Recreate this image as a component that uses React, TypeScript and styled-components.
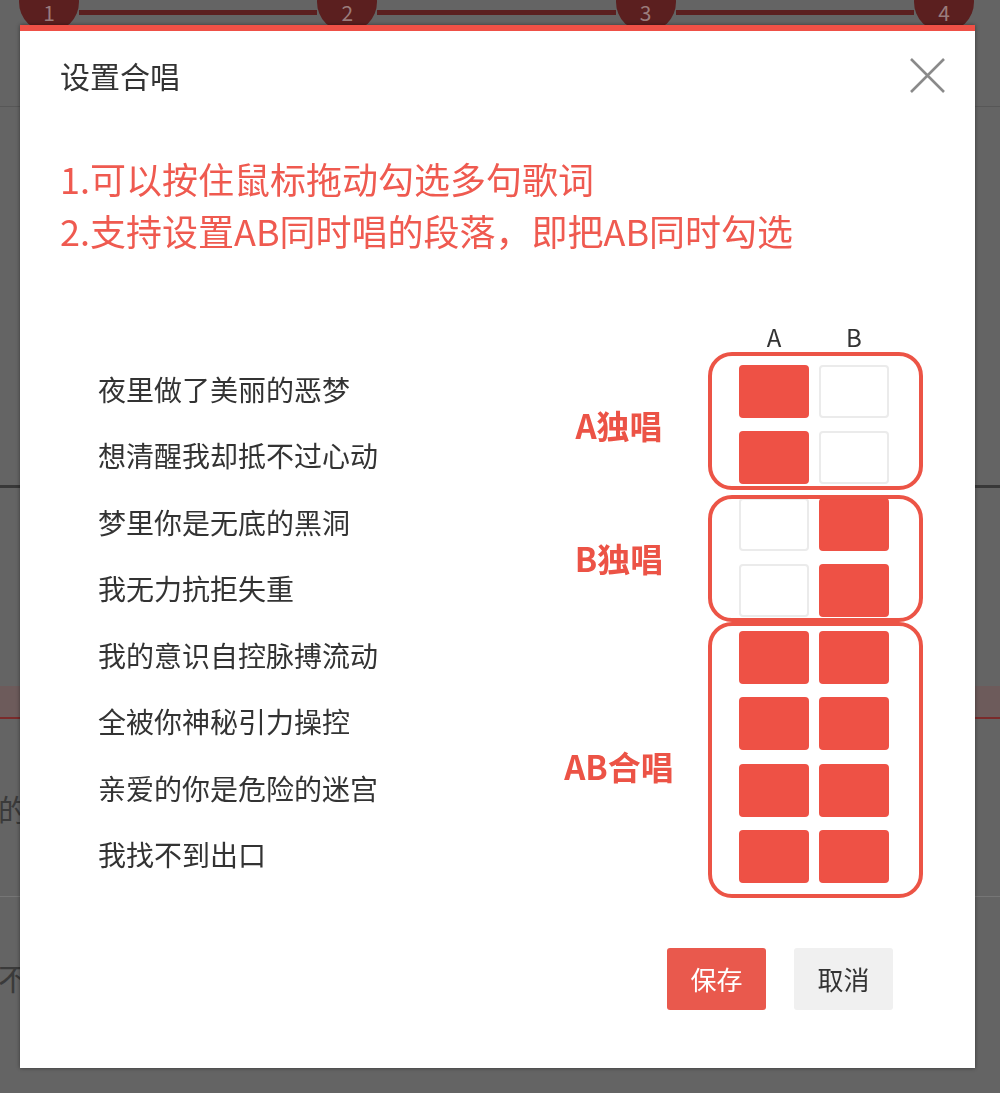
import React, { useState } from 'react';
import styled, { createGlobalStyle } from 'styled-components';

const GlobalStyle = createGlobalStyle`
    html, body {
        margin: 0;
        padding: 0;
        background: #646464;
        font-family: "Noto Sans CJK SC", "Noto Sans", sans-serif;
    }
    * { box-sizing: border-box; }
`;

/////////////////////  dimmed page behind the dialog

const Page = styled.div`
    width: 1000px;
    height: 1093px;
    overflow: hidden;
    background: #646464;
`;
const StepBar = styled.div`
    display: flex;
    align-items: flex-start;
    height: 32px;
    padding: 0 26px 0 19px;
`;
const StepDot = styled.div`
    width: 60px;
    height: 60px;
    margin-top: -28px;
    border-radius: 50%;
    background: #5b1f1f;
    color: #9a7c7c;
    font-size: 21px;
    text-align: center;
    padding-top: 29px;
    line-height: 22px;
    flex-shrink: 0;
`;
const StepLine = styled.div`
    flex: 1;
    height: 5px;
    margin-top: 10px;
    background: #5b1f1f;
`;
const BackSection = styled.div<{ $h: number; $line?: string }>`
    height: ${p => p.$h}px;
    border-bottom: ${p => p.$line || 'none'};
    display: flex;
    align-items: center;
`;
const BackBand = styled.div`
    height: 33px;
    background: #6d5b5b;
    border-bottom: 2px solid #7b2b2b;
`;
const BackText = styled.span`
    font-size: 30px;
    color: #3a3a3a;
    margin-left: -2px;
`;

/////////////////////  dialog

const Modal = styled.div`
    position: fixed;
    top: 25px;
    left: 20px;
    width: 955px;
    height: 1043px;
    background: #fff;
    border-top: 6px solid #ef5046;
    box-shadow: 0 0 4px rgba(0, 0, 0, 0.45);
    display: flex;
    flex-direction: column;
`;
const Header = styled.div`
    height: 88px;
    display: flex;
    align-items: center;
    justify-content: space-between;
    padding: 0 28px 0 40px;
`;
const Title = styled.h1`
    margin: 0;
    font-size: 30px;
    font-weight: normal;
    color: #333;
`;
const CloseButton = styled.button`
    border: none;
    background: none;
    padding: 0;
    width: 39px;
    height: 37px;
    cursor: pointer;
    display: flex;
    align-items: center;
    justify-content: center;
`;
const Body = styled.div`
    padding: 0 86px 0 40px;
`;
const Tips = styled.div`
    margin-top: 33px;
    font-size: 36px;
    line-height: 52px;
    color: #ef5a50;
`;
const LyricGrid = styled.div`
    display: grid;
    grid-template-columns: 1fr 120px 40px 70px 70px;
    grid-template-rows: 30px repeat(8, 53px);
    column-gap: 10px;
    row-gap: 13.43px;
    margin: 65.6px 0 0 38px;
`;
const ColHead = styled.div<{ $col: number }>`
    grid-row: 1;
    grid-column: ${p => p.$col};
    text-align: center;
    font-size: 24px;
    line-height: 30px;
    color: #333;
`;
const Lyric = styled.div<{ $row: number }>`
    grid-row: ${p => p.$row};
    grid-column: 1;
    align-self: center;
    margin-bottom: 5px;
    font-size: 28px;
    color: #333;
    white-space: nowrap;
`;
const Cell = styled.div<{ $row: number; $col: number; $on: boolean }>`
    grid-row: ${p => p.$row};
    grid-column: ${p => p.$col};
    border-radius: 4px;
    background: ${p => (p.$on ? '#ee5145' : '#fff')};
    border: 2px solid ${p => (p.$on ? '#ee5145' : '#ebebeb')};
    cursor: pointer;
`;
const GroupBox = styled.div<{ $rows: string; $top: number; $bottom: number }>`
    grid-row: ${p => p.$rows};
    grid-column: 4 / 6;
    margin: ${p => p.$top}px -34px ${p => p.$bottom}px -31px;
    border: 4px solid #ec5446;
    border-radius: 24px;
    pointer-events: none;
    z-index: 1;
`;
const GroupLabel = styled.div<{ $rows: string; $shift?: number }>`
    grid-row: ${p => p.$rows};
    grid-column: 2;
    align-self: center;
    justify-self: center;
    margin-top: ${p => p.$shift || 0}px;
    font-size: 33px;
    font-weight: bold;
    color: #ec5346;
    white-space: nowrap;
`;
const Footer = styled.div`
    display: flex;
    justify-content: flex-end;
    gap: 28px;
    margin: 65px 82px 0 0;
`;
const Button = styled.button<{ $primary?: boolean }>`
    width: 99px;
    height: 62px;
    border: none;
    border-radius: 3px;
    font-family: inherit;
    font-size: 26px;
    cursor: pointer;
    background: ${p => (p.$primary ? '#e9594d' : '#f0f0f0')};
    color: ${p => (p.$primary ? '#fff' : '#333')};
`;

const LYRICS = [
    '夜里做了美丽的恶梦',
    '想清醒我却抵不过心动',
    '梦里你是无底的黑洞',
    '我无力抗拒失重',
    '我的意识自控脉搏流动',
    '全被你神秘引力操控',
    '亲爱的你是危险的迷宫',
    '我找不到出口',
];

const INITIAL = [
    [true, false],
    [true, false],
    [false, true],
    [false, true],
    [true, true],
    [true, true],
    [true, true],
    [true, true],
];

const App: React.FC = () => {
    const [marks, setMarks] = useState(INITIAL);

    const toggle = (row: number, col: number) => {
        const next = marks.map(r => [...r]);
        next[row][col] = !next[row][col];
        setMarks(next);
    };

    return (
        <Page>
            <GlobalStyle />
            <StepBar>
                <StepDot>1</StepDot>
                <StepLine />
                <StepDot>2</StepDot>
                <StepLine />
                <StepDot>3</StepDot>
                <StepLine />
                <StepDot>4</StepDot>
            </StepBar>
            <BackSection $h={75} $line="1px solid #575757" />
            <BackSection $h={381} $line="3px solid #383838" />
            <BackSection $h={198} />
            <BackBand />
            <BackSection $h={178} $line="1px solid #767676">
                <BackText>的</BackText>
            </BackSection>
            <BackSection $h={160}>
                <BackText>不</BackText>
            </BackSection>

            <Modal>
                <Header>
                    <Title>设置合唱</Title>
                    <CloseButton aria-label="关闭">
                        <svg width="37" height="35" viewBox="0 0 37 35">
                            <path d="M2 1 L35 34 M35 1 L2 34" stroke="#8a8a8a" strokeWidth="2.6" fill="none" />
                        </svg>
                    </CloseButton>
                </Header>
                <Body>
                    <Tips>
                        <div>1.可以按住鼠标拖动勾选多句歌词</div>
                        <div>2.支持设置AB同时唱的段落，即把AB同时勾选</div>
                    </Tips>
                    <LyricGrid>
                        <ColHead $col={4}>A</ColHead>
                        <ColHead $col={5}>B</ColHead>
                        {LYRICS.map((text, i) => (
                            <React.Fragment key={text}>
                                <Lyric $row={i + 2}>{text}</Lyric>
                                <Cell $row={i + 2} $col={4} $on={marks[i][0]} onClick={() => toggle(i, 0)} />
                                <Cell $row={i + 2} $col={5} $on={marks[i][1]} onClick={() => toggle(i, 1)} />
                            </React.Fragment>
                        ))}
                        <GroupLabel $rows="2 / 4">A独唱</GroupLabel>
                        <GroupLabel $rows="4 / 6">B独唱</GroupLabel>
                        <GroupLabel $rows="6 / 10" $shift={18}>AB合唱</GroupLabel>
                        <GroupBox $rows="2 / 4" $top={-13} $bottom={-6} />
                        <GroupBox $rows="4 / 6" $top={-3} $bottom={-5} />
                        <GroupBox $rows="6 / 10" $top={-9} $bottom={-15} />
                    </LyricGrid>
                </Body>
                <Footer>
                    <Button $primary>保存</Button>
                    <Button>取消</Button>
                </Footer>
            </Modal>
        </Page>
    );
};

export default App;
